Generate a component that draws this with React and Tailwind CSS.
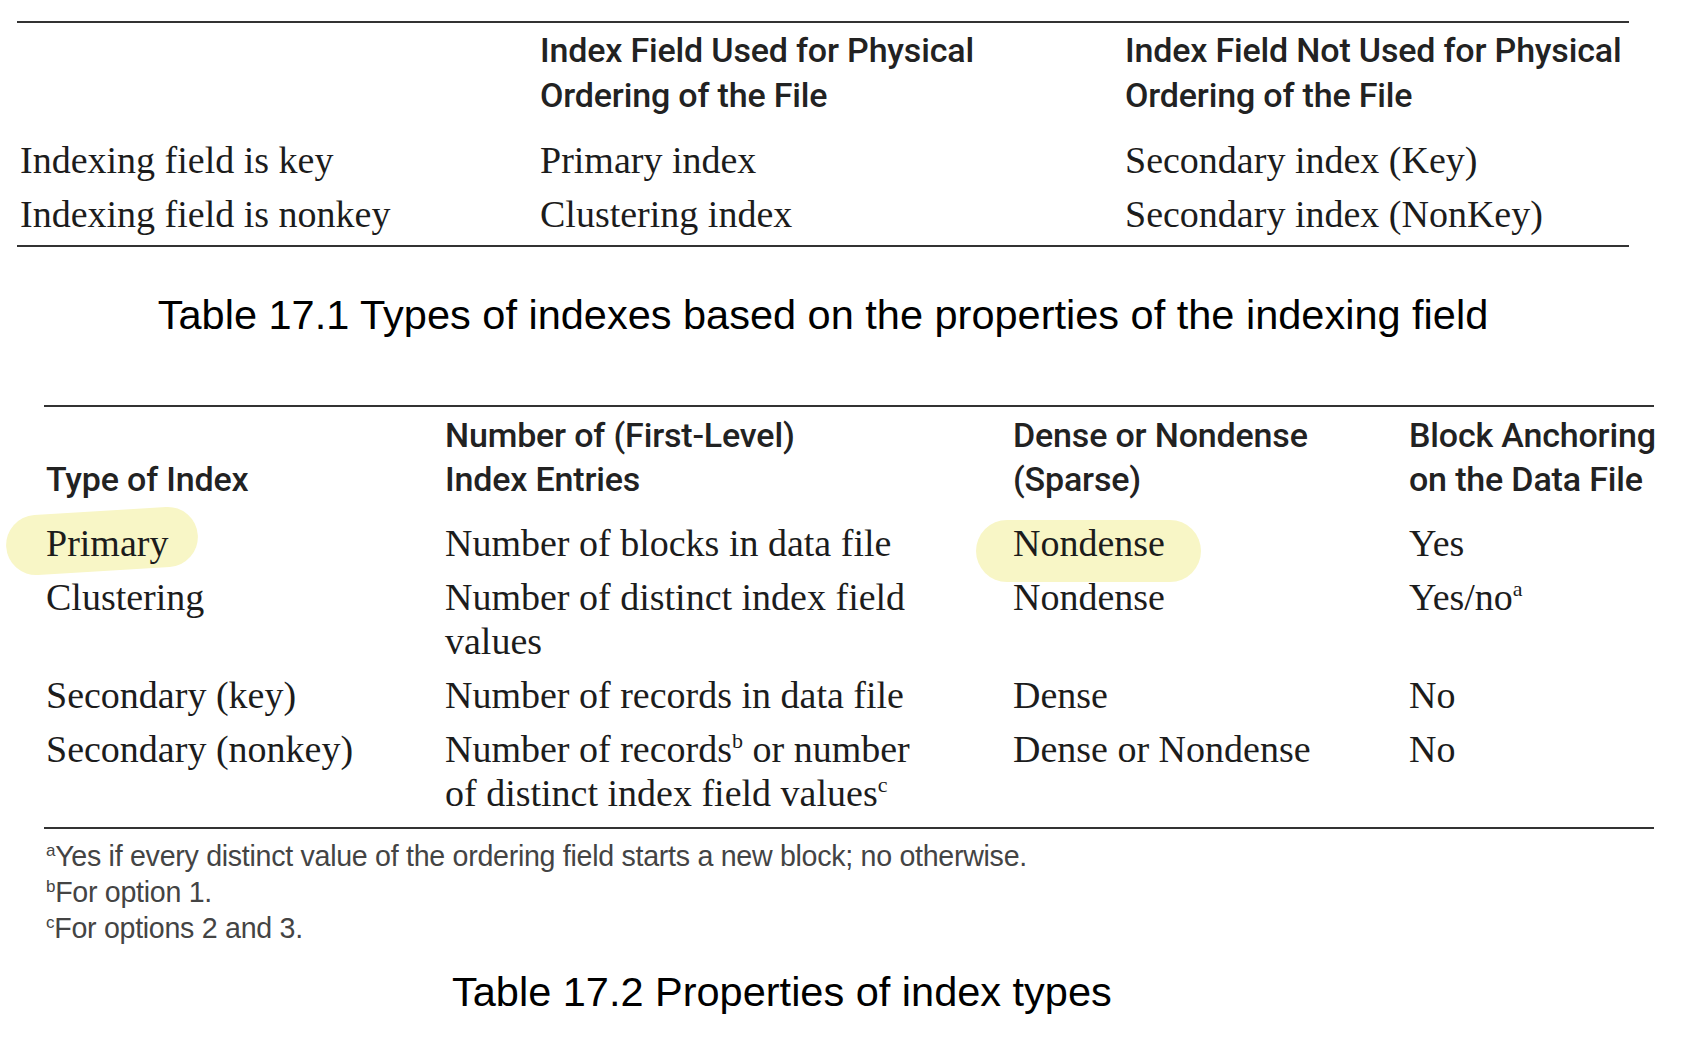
export default function App() {
  const head = "whitespace-nowrap font-['Roboto','Liberation_Sans',sans-serif] font-medium text-[34px] leading-[44px] tracking-[-0.005em] text-[#222]";
  const body = "font-['Liberation_Serif','Times_New_Roman',serif] text-[38px] text-[#1c1c1c]";
  const sup = "relative -top-[14px] text-[22px] leading-none align-baseline";
  const fsup = "relative -top-[10px] text-[17px] leading-none";
  return (
    <div className="isolate w-[1693px] h-[1038px] bg-white overflow-hidden pt-[21px]">
      {/* Table 17.1 */}
      <div className="ml-[17px] w-[1612px]">
        <div className="border-t-2 border-[#333]" />
        <div className="grid grid-cols-[520px_585px_1fr] pl-[3px] pt-[5px]">
          <div />
          <div className={head + " leading-[45px]"}>
            Index Field Used for Physical
            <br />
            Ordering of the File
          </div>
          <div className={head + " leading-[45px]"}>
            Index Field Not Used for Physical
            <br />
            Ordering of the File
          </div>
        </div>
        <div className={"grid grid-cols-[520px_585px_1fr] pl-[3px] pt-[15px] pb-[4px] leading-[54px] " + body}>
          <div>Indexing field is key</div>
          <div>Primary index</div>
          <div>Secondary index (Key)</div>
          <div>Indexing field is nonkey</div>
          <div>Clustering index</div>
          <div>Secondary index (NonKey)</div>
        </div>
        <div className="border-t-2 border-[#333]" />
        <div className="mt-[44px] text-center font-['Liberation_Sans','Arial',sans-serif] text-[41.5px] leading-[48px] text-black">
          Table 17.1 Types of indexes based on the properties of the indexing field
        </div>
      </div>

      {/* Table 17.2 */}
      <div className="ml-[44px] w-[1610px] mt-[66px]">
        <div className="border-t-2 border-[#333]" />
        <div className="grid grid-cols-[399px_568px_396px_1fr] pl-[2px] pt-[6px] items-end">
          <div className={head}>Type of Index</div>
          <div className={head}>
            Number of (First-Level)
            <br />
            Index Entries
          </div>
          <div className={head}>
            Dense or Nondense
            <br />
            (Sparse)
          </div>
          <div className={head}>
            Block Anchoring
            <br />
            on the Data File
          </div>
        </div>
        <div className={"grid grid-cols-[399px_568px_396px_1fr] pl-[2px] pt-[20px] pb-[12px] gap-y-[10px] leading-[44px] " + body}>
          <div className="relative">
            <span className="absolute -z-10 left-[-40px] top-[-10px] w-[192px] h-[60px] rounded-full bg-[#f8f6c6] -rotate-[3.5deg]" />
            Primary
          </div>
          <div>Number of blocks in data file</div>
          <div className="relative">
            <span className="absolute -z-10 left-[-37px] top-[-1px] w-[225px] h-[62px] rounded-full bg-[#f8f6c6]" />
            Nondense
          </div>
          <div>Yes</div>

          <div>Clustering</div>
          <div>
            Number of distinct index field
            <br />
            values
          </div>
          <div>Nondense</div>
          <div>
            Yes/no<span className={sup}>a</span>
          </div>

          <div>Secondary (key)</div>
          <div>Number of records in data file</div>
          <div>Dense</div>
          <div>No</div>

          <div>Secondary (nonkey)</div>
          <div>
            Number of records<span className={sup}>b</span> or number
            <br />
            of distinct index field values<span className={sup}>c</span>
          </div>
          <div>Dense or Nondense</div>
          <div>No</div>
        </div>
        <div className="border-t-2 border-[#333]" />
        <div className="pl-[2px] pt-[9px] font-['Liberation_Sans','Arial',sans-serif] text-[28.6px] leading-[36px] text-[#444] tracking-[-0.01em]">
          <div>
            <span className={fsup}>a</span>Yes if every distinct value of the ordering field starts a new block; no otherwise.
          </div>
          <div>
            <span className={fsup}>b</span>For option 1.
          </div>
          <div>
            <span className={fsup}>c</span>For options 2 and 3.
          </div>
        </div>
      </div>
      <div className="mt-[22px] pl-[452px] font-['Liberation_Sans','Arial',sans-serif] text-[41.5px] leading-[48px] text-black">
        Table 17.2 Properties of index types
      </div>
    </div>
  );
}
